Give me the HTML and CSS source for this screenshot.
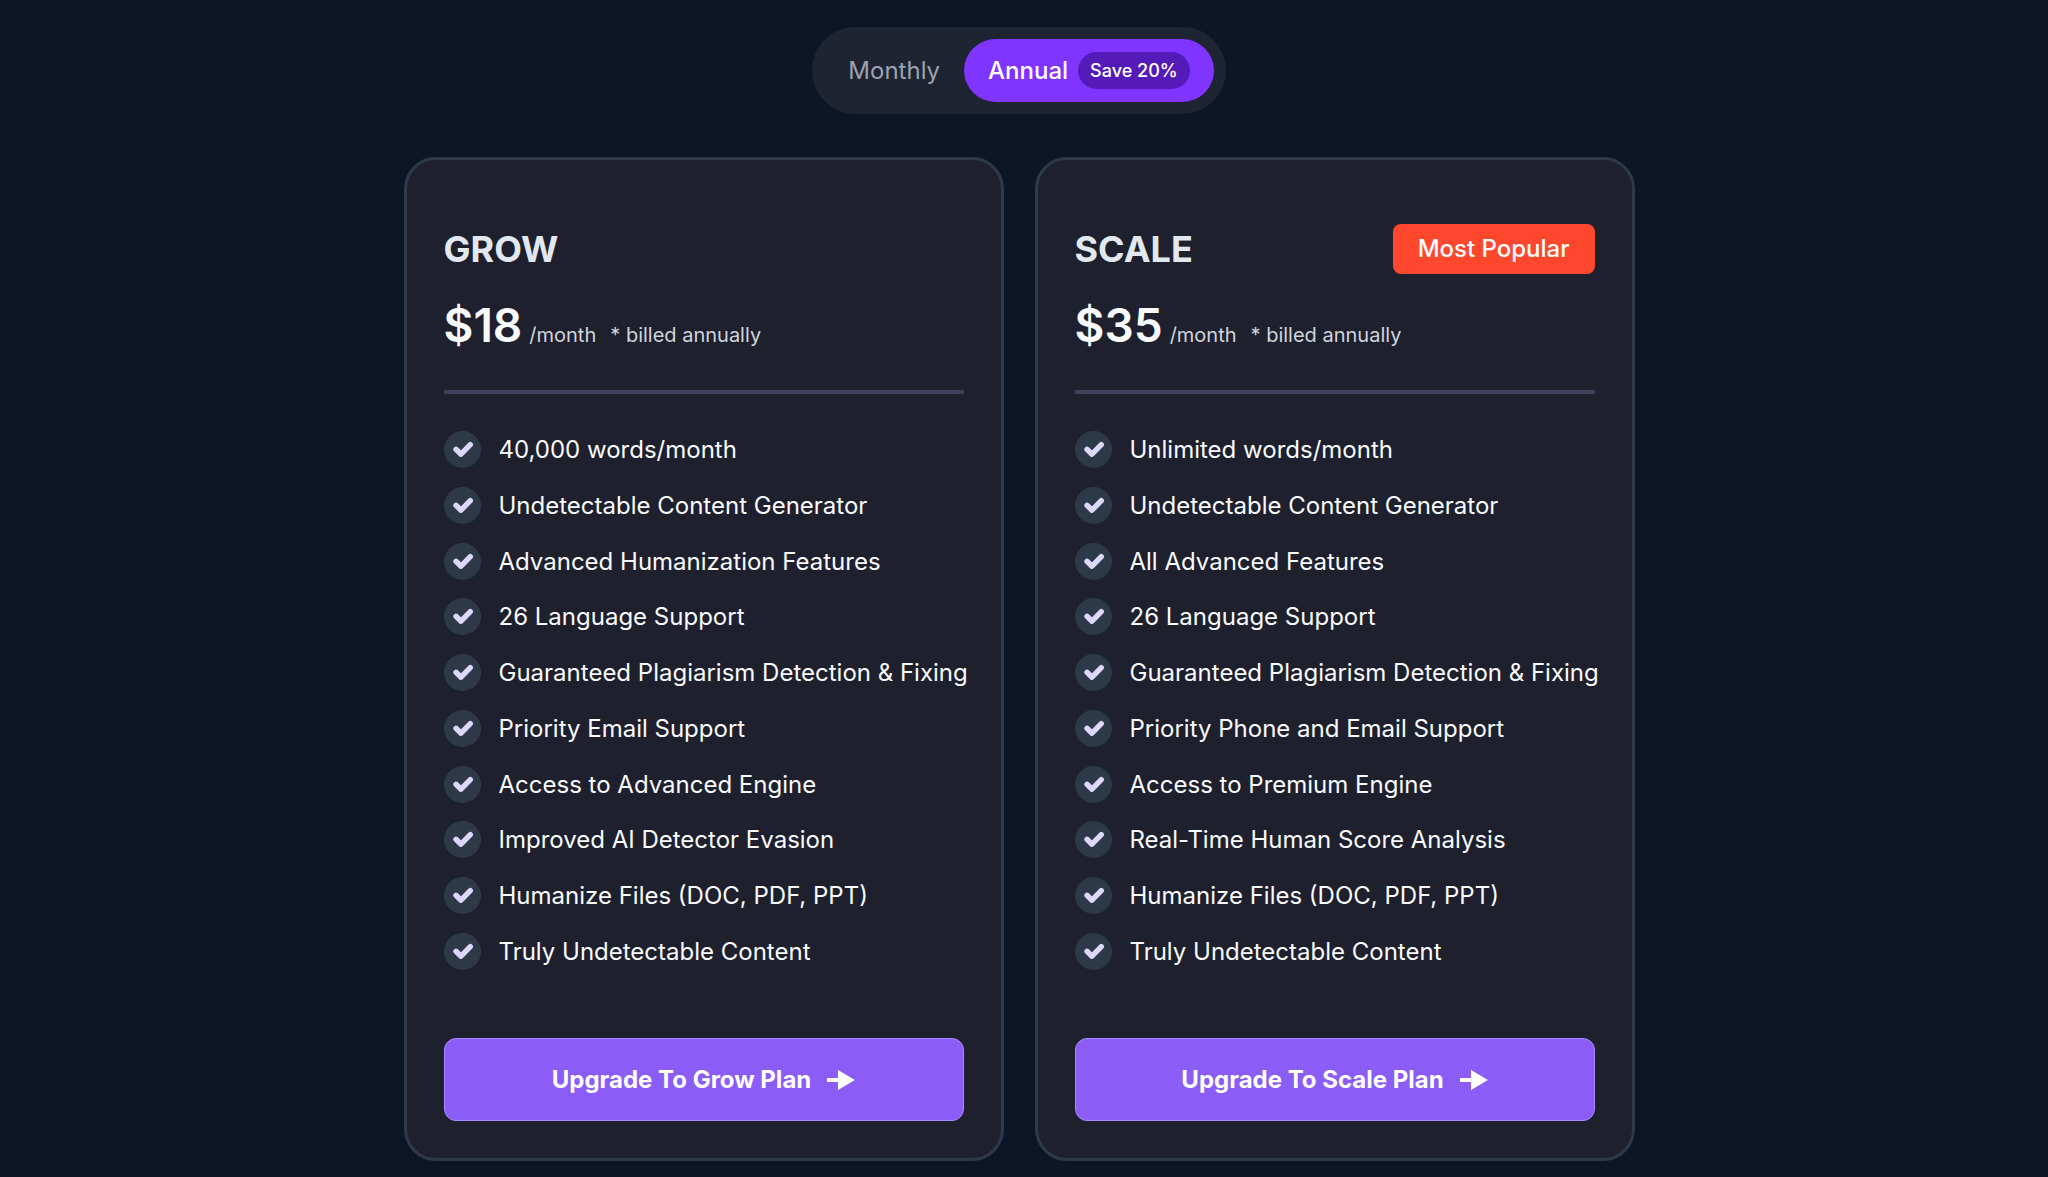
FILE: index.html
```html
<!DOCTYPE html>
<html lang="en">
<head>
    <meta charset="UTF-8">
    <meta name="viewport" content="width=device-width, initial-scale=1.0">
    <title>Pricing</title>
    <link rel="stylesheet" href="styles.css">
</head>
<body>

    <!-- Shared icons -->
    <svg class="sprite" aria-hidden="true">
        <symbol id="check" viewBox="0 0 37 37">
            <path d="M12 18.3 L17 23.2 L26.3 13.7" fill="none" stroke="currentColor" stroke-width="5.4" stroke-linecap="round" stroke-linejoin="round"/>
        </symbol>
        <symbol id="arrow" viewBox="0 0 28 20">
            <path d="M0 8 H11 V0 L28 10 L11 20 V12 H0 Z" fill="currentColor"/>
        </symbol>
    </svg>

    <div class="billing-toggle">
        <button type="button" class="toggle-btn">Monthly</button>
        <button type="button" class="toggle-btn active">Annual <span class="save">Save 20%</span></button>
    </div>

    <main class="plans">
        <section class="card">
            <div class="card-head">
                <h2>GROW</h2>
            </div>
            <p class="price"><strong>$18</strong> <span class="period">/month</span> <span class="note">* billed annually</span></p>
            <hr>
            <ul class="features">
                <li><svg><use href="#check"/></svg>40,000 words/month</li>
                <li><svg><use href="#check"/></svg>Undetectable Content Generator</li>
                <li><svg><use href="#check"/></svg>Advanced Humanization Features</li>
                <li><svg><use href="#check"/></svg>26 Language Support</li>
                <li><svg><use href="#check"/></svg>Guaranteed Plagiarism Detection &amp; Fixing</li>
                <li><svg><use href="#check"/></svg>Priority Email Support</li>
                <li><svg><use href="#check"/></svg>Access to Advanced Engine</li>
                <li><svg><use href="#check"/></svg>Improved AI Detector Evasion</li>
                <li><svg><use href="#check"/></svg>Humanize Files (DOC, PDF, PPT)</li>
                <li><svg><use href="#check"/></svg>Truly Undetectable Content</li>
            </ul>
            <button type="button" class="upgrade">Upgrade To Grow Plan <svg><use href="#arrow"/></svg></button>
        </section>

        <section class="card">
            <div class="card-head">
                <h2>SCALE</h2>
                <span class="popular">Most Popular</span>
            </div>
            <p class="price"><strong>$35</strong> <span class="period">/month</span> <span class="note">* billed annually</span></p>
            <hr>
            <ul class="features">
                <li><svg><use href="#check"/></svg>Unlimited words/month</li>
                <li><svg><use href="#check"/></svg>Undetectable Content Generator</li>
                <li><svg><use href="#check"/></svg>All Advanced Features</li>
                <li><svg><use href="#check"/></svg>26 Language Support</li>
                <li><svg><use href="#check"/></svg>Guaranteed Plagiarism Detection &amp; Fixing</li>
                <li><svg><use href="#check"/></svg>Priority Phone and Email Support</li>
                <li><svg><use href="#check"/></svg>Access to Premium Engine</li>
                <li><svg><use href="#check"/></svg>Real-Time Human Score Analysis</li>
                <li><svg><use href="#check"/></svg>Humanize Files (DOC, PDF, PPT)</li>
                <li><svg><use href="#check"/></svg>Truly Undetectable Content</li>
            </ul>
            <button type="button" class="upgrade">Upgrade To Scale Plan <svg><use href="#arrow"/></svg></button>
        </section>
    </main>

</body>
</html>
```

FILE: styles.css
```css
* {
    box-sizing: border-box;
}
body {
    margin: 0;
    padding: 27px 10px 16px 0;
    min-height: 100vh;
    display: flex;
    flex-direction: column;
    align-items: center;
    gap: 43px;
    background-color: #0d1627;
    color: #f8fafc;
    font-family: Inter, sans-serif;
    font-size: 24px;
}
button {
    border: none;
    font-family: inherit;
    font-size: 24px;
    cursor: pointer;
}
.sprite {
    position: absolute;
    width: 0;
    height: 0;
}

/* Monthly / annual switch */
.billing-toggle {
    display: flex;
    padding: 12px;
    border-radius: 44px;
    background-color: #1e2432;
}
.toggle-btn {
    display: flex;
    align-items: center;
    gap: 10px;
    height: 63px;
    padding: 0 24px;
    border-radius: 32px;
    background: none;
    color: #9ca3af;
}
.toggle-btn.active {
    background-color: #7f35ff;
    color: #fff;
    font-weight: 500;
}
.save {
    padding: 0 12px;
    border-radius: 19px;
    background-color: #551bb9;
    font-size: 18px;
    line-height: 37px;
}

/* Plan cards */
.plans {
    flex: 1;
    width: 100%;
    max-width: 1231px;
    display: grid;
    grid-template-columns: repeat(2, minmax(0, 1fr));
    gap: 31px;
}
.card {
    display: flex;
    flex-direction: column;
    padding: 64px 37px 37px;
    border: 3px solid #2f3948;
    border-radius: 32px;
    background-color: #1e202e;
}
.card-head {
    display: flex;
    justify-content: space-between;
    align-items: center;
    height: 50px;
}
h2 {
    margin: 0;
    color: #e2e8f0;
    font-size: 36px;
    font-weight: 700;
}
.popular {
    padding: 0 25px;
    border-radius: 8px;
    background-color: #ff472e;
    color: #fff;
    font-weight: 500;
    line-height: 50px;
}
.price {
    display: flex;
    align-items: baseline;
    margin: 23px 0 37px;
}
.price strong {
    font-size: 46px;
    font-weight: 600;
    line-height: 56px;
}
.period,
.note {
    margin-left: 7px;
    color: #d1d5db;
    font-size: 20px;
    line-height: 24px;
}
.note {
    margin-left: 14px;
}
hr {
    width: 100%;
    height: 4px;
    margin: 0 0 37px;
    border: none;
    background-color: #3f425c;
}
.features {
    flex: 1;
    display: flex;
    flex-direction: column;
    justify-content: space-between;
    margin: 0 0 68px;
    padding: 0;
    list-style: none;
    white-space: nowrap;
}
.features li {
    display: flex;
    align-items: center;
    gap: 18px;
    line-height: 37px;
}
.features svg {
    flex: none;
    width: 37px;
    height: 37px;
    border-radius: 50%;
    background-color: #2e3948;
    color: #ddd6fe;
}
.upgrade {
    display: flex;
    justify-content: center;
    align-items: center;
    gap: 16px;
    height: 83px;
    border: 1px solid #a78bfa;
    border-radius: 12px;
    background-color: #8b5cf6;
    color: #fff;
    font-weight: 700;
}
.upgrade svg {
    width: 28px;
    height: 20px;
}
```
